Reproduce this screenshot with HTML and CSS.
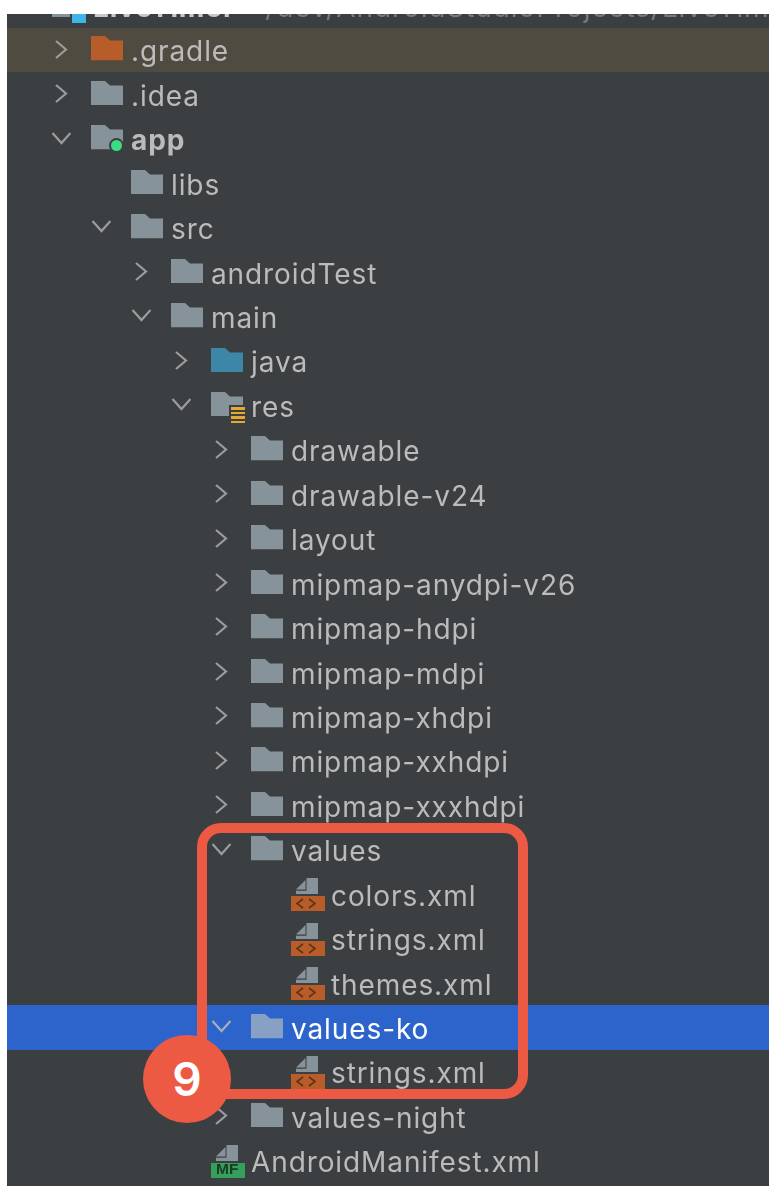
FILE: index.html
```html
<!DOCTYPE html>
<html lang="en">
<head>
<meta charset="utf-8">
<title>Project tree</title>
<link rel="stylesheet" href="styles.css">
</head>
<body>
<svg class="defs" width="0" height="0" aria-hidden="true">
  <symbol id="folder" viewBox="0 0 32 24.5"><path d="M0 0H14L19 4.5H32V24.5H0Z"/></symbol>
  <symbol id="chev-r" viewBox="0 0 20 20"><path d="M5 2L15 10.5L5 19" fill="none" stroke="currentColor" stroke-width="2.2"/></symbol>
  <symbol id="chev-d" viewBox="0 0 20 20"><path d="M1.5 5L10.5 15L19.5 5" fill="none" stroke="currentColor" stroke-width="2.2"/></symbol>
  <symbol id="page" viewBox="0 0 34 34">
    <path fill="#87939a" d="M15.5 0H27V16H5V12.8H15.5Z"/>
    <path fill="#87939a" d="M5 11.5L14.5 2V11.5Z"/>
  </symbol>
  <symbol id="xml" viewBox="0 0 34 34">
    <use href="#page"/>
    <rect y="18" width="34" height="15" fill="#b85c2a"/>
    <path d="M12 21L6 25.5L12 30M18 21L24 25.5L18 30" fill="none" stroke="#5e3418" stroke-width="1.6"/>
  </symbol>
  <symbol id="mf" viewBox="0 0 34 34">
    <use href="#page"/>
    <rect y="18" width="34" height="15" fill="#35a05c"/>
  </symbol>
</svg>
<main class="panel">
  <div class="top">
    <div class="top-inner">
      <span class="module-folder"></span>
      <span class="module-icon"></span>
      <b class="top-name">LiveTimer</b>
      <span class="top-path">/dev/AndroidStudioProjects/LiveTimer</span>
    </div>
  </div>
  <ul class="tree">
    <li class="row excluded l1"><svg class="chev"><use href="#chev-r"/></svg><svg class="ic folder orange"><use href="#folder"/></svg><span class="label">.gradle</span></li>
    <li class="row l1"><svg class="chev"><use href="#chev-r"/></svg><svg class="ic folder"><use href="#folder"/></svg><span class="label">.idea</span></li>
    <li class="row l1"><svg class="chev"><use href="#chev-d"/></svg><span class="badged"><svg class="folder"><use href="#folder"/></svg><i class="dot"></i></span><strong class="label">app</strong></li>
    <li class="row l2"><span class="chev"></span><svg class="ic folder"><use href="#folder"/></svg><span class="label">libs</span></li>
    <li class="row l2"><svg class="chev"><use href="#chev-d"/></svg><svg class="ic folder"><use href="#folder"/></svg><span class="label">src</span></li>
    <li class="row l3"><svg class="chev"><use href="#chev-r"/></svg><svg class="ic folder"><use href="#folder"/></svg><span class="label">androidTest</span></li>
    <li class="row l3"><svg class="chev"><use href="#chev-d"/></svg><svg class="ic folder"><use href="#folder"/></svg><span class="label">main</span></li>
    <li class="row l4"><svg class="chev"><use href="#chev-r"/></svg><svg class="ic folder blue"><use href="#folder"/></svg><span class="label">java</span></li>
    <li class="row l4"><svg class="chev"><use href="#chev-d"/></svg><span class="badged"><svg class="folder"><use href="#folder"/></svg><i class="lines"></i></span><span class="label">res</span></li>
    <li class="row l5"><svg class="chev"><use href="#chev-r"/></svg><svg class="ic folder"><use href="#folder"/></svg><span class="label">drawable</span></li>
    <li class="row l5"><svg class="chev"><use href="#chev-r"/></svg><svg class="ic folder"><use href="#folder"/></svg><span class="label">drawable-v24</span></li>
    <li class="row l5"><svg class="chev"><use href="#chev-r"/></svg><svg class="ic folder"><use href="#folder"/></svg><span class="label">layout</span></li>
    <li class="row l5"><svg class="chev"><use href="#chev-r"/></svg><svg class="ic folder"><use href="#folder"/></svg><span class="label">mipmap-anydpi-v26</span></li>
    <li class="row l5"><svg class="chev"><use href="#chev-r"/></svg><svg class="ic folder"><use href="#folder"/></svg><span class="label">mipmap-hdpi</span></li>
    <li class="row l5"><svg class="chev"><use href="#chev-r"/></svg><svg class="ic folder"><use href="#folder"/></svg><span class="label">mipmap-mdpi</span></li>
    <li class="row l5"><svg class="chev"><use href="#chev-r"/></svg><svg class="ic folder"><use href="#folder"/></svg><span class="label">mipmap-xhdpi</span></li>
    <li class="row l5"><svg class="chev"><use href="#chev-r"/></svg><svg class="ic folder"><use href="#folder"/></svg><span class="label">mipmap-xxhdpi</span></li>
    <li class="row l5"><svg class="chev"><use href="#chev-r"/></svg><svg class="ic folder"><use href="#folder"/></svg><span class="label">mipmap-xxxhdpi</span></li>
    <li class="row l5"><svg class="chev"><use href="#chev-d"/></svg><svg class="ic folder"><use href="#folder"/></svg><span class="label">values</span></li>
    <li class="row l6"><svg class="file"><use href="#xml"/></svg><span class="label">colors.xml</span></li>
    <li class="row l6"><svg class="file"><use href="#xml"/></svg><span class="label">strings.xml</span></li>
    <li class="row l6"><svg class="file"><use href="#xml"/></svg><span class="label">themes.xml</span></li>
    <li class="row l5 selected"><svg class="chev"><use href="#chev-d"/></svg><svg class="ic folder light"><use href="#folder"/></svg><span class="label">values-ko</span></li>
    <li class="row l6"><svg class="file"><use href="#xml"/></svg><span class="label">strings.xml</span></li>
    <li class="row l5"><svg class="chev"><use href="#chev-r"/></svg><svg class="ic folder"><use href="#folder"/></svg><span class="label">values-night</span></li>
    <li class="row l4"><span class="chev"></span><span class="mf"><svg class="file"><use href="#mf"/></svg><i class="mf-text">MF</i></span><span class="label">AndroidManifest.xml</span></li>
  </ul>
</main>
<div class="callout-box"></div>
<div class="callout-num">9</div>
</body>
</html>
```
FILE: styles.css
```css
* { box-sizing: border-box; }
html, body { margin: 0; padding: 0; background: #fff; }
body { width: 776px; height: 1196px; overflow: hidden; position: relative; font-family: Inter, "Noto Sans", sans-serif; }
.defs { position: absolute; }
.panel { margin: 14px 0 0 7px; width: 762px; height: 1172px; background: #3c3f41; overflow: hidden; color: #bbbbbb; filter: blur(0.35px); }
.top { height: 13.7px; overflow: hidden; }
.top-inner { display: flex; align-items: center; height: 44px; margin-top: -29px; padding-left: 45px; font-size: 28px; letter-spacing: 0.9px; white-space: nowrap; }
.module-folder { width: 18px; height: 20px; margin-right: 2px; background: #87939a; flex: none; }
.module-icon { width: 14px; height: 32px; background: #3fb6e8; flex: none; }
.top-name { margin-left: 7px; font-weight: 700; color: #c8c8c8; }
.top-path { margin-left: 30px; color: #77797b; }
.tree { list-style: none; margin: 0; padding: 0; }
.row { height: 44.45px; display: flex; align-items: center; font-size: 28px; letter-spacing: 0.9px; line-height: 44px; white-space: nowrap; }
.label { margin-left: 8px; margin-top: 3px; }
.file + .label, .mf + .label { margin-left: 6px; }
.l1 { padding-left: 44px; }
.l2 { padding-left: 84px; }
.l3 { padding-left: 124px; }
.l4 { padding-left: 164px; }
.l5 { padding-left: 204px; }
.l6 { padding-left: 284px; }
.chev { width: 20px; height: 20px; margin-right: 20px; margin-bottom: 2.4px; flex: none; color: #9a9c9e; overflow: visible; }
.ic { display: block; flex: none; margin-bottom: 2.4px; }
.folder { display: block; width: 32px; height: 24.5px; fill: #87939a; }
.orange { fill: #b85c2a; }
.blue { fill: #3d86a8; }
.light { fill: #87a0c4; }
.file { display: block; width: 34px; height: 34px; flex: none; margin-top: 2px; }
.excluded { background: #4f4b41; }
.selected { background: #2d64cb; color: #fff; }
.selected .chev { color: #a8aeb8; }
.badged { position: relative; display: block; flex: none; width: 32px; height: 24.5px; margin-bottom: 2.4px; }
.dot { position: absolute; right: -1px; bottom: -3.5px; width: 15px; height: 15px; border-radius: 50%; background: #3ddc84; border: 2px solid #3c3f41; }
.lines { position: absolute; left: 20px; top: 15px; width: 14px; height: 16px; background: repeating-linear-gradient(#e5a92f 0 2.5px, #3c3f41 2.5px 4.5px); box-shadow: 0 0 0 2px #3c3f41; }
.mf { position: relative; display: block; flex: none; width: 34px; height: 36px; }
.mf-text { position: absolute; left: 5px; bottom: 2px; font: 700 15.5px/16px "Liberation Sans", sans-serif; font-style: normal; letter-spacing: 0; color: #1d3a25; }
.callout-box { position: absolute; left: 197px; top: 823px; width: 331px; height: 276px; border: 10px solid #ec5a43; border-radius: 24px; }
.callout-num { position: absolute; left: 143px; top: 1035px; width: 88px; height: 88px; border-radius: 50%; background: #ec5a43; color: #fff; font: 600 46px/88px Inter, sans-serif; text-align: center; }
```
